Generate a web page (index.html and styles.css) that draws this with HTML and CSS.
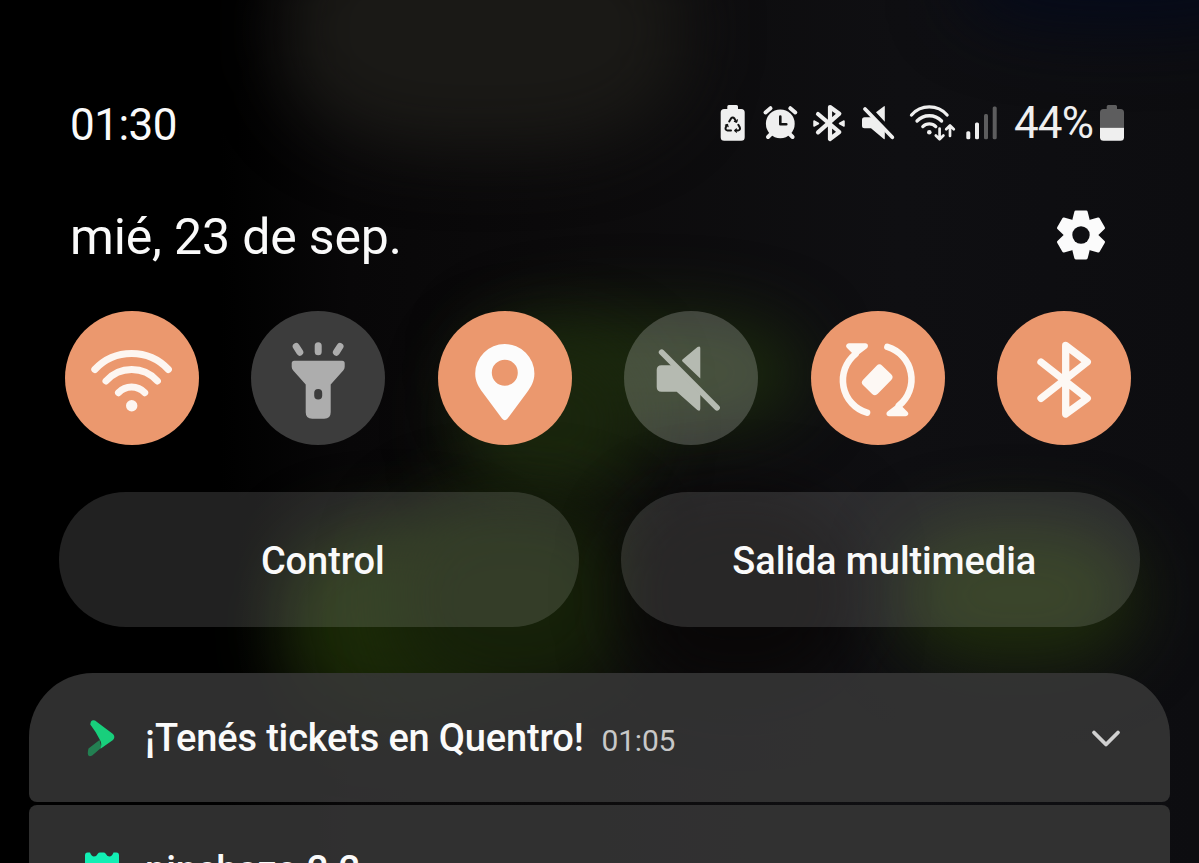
FILE: index.html
```html
<!DOCTYPE html>
<html lang="es">
<head>
  <meta charset="UTF-8">
  <title>Panel de notificaciones</title>
  <meta name="viewport" content="width=device-width, initial-scale=1.0">
  <link rel="stylesheet" href="styles.css">
</head>
<body>

  <!-- Fondo desenfocado -->
  <div class="fondo">
    <div class="mancha cafe"></div>
    <div class="mancha azul"></div>
    <div class="mancha verde-centro"></div>
    <div class="mancha verde-medio"></div>
    <div class="mancha verde-izq"></div>
    <div class="mancha verde-abajo"></div>
    <div class="mancha verde-der"></div>
    <div class="mancha rojo"></div>
  </div>

  <main class="panel">
    <!-- Barra de estado -->
    <header class="estado">
      <span class="hora">01:30</span>
      <div class="iconos">
        <svg width="37" height="50" viewBox="16 10 37 50">
          <path fill="#efefef" d="M27.3 19v-2.5q0-1.5 1.5-1.5h7.7q1.5 0 1.5 1.5V19h3.2q3.5 0 3.5 3.5v24.7q0 3.5-3.5 3.5h-17q-3.5 0-3.5-3.5V22.5q0-3.5 3.5-3.5z"/>
          <g fill="none" stroke="#111" stroke-width="2" stroke-linecap="round" stroke-linejoin="round">
            <path d="M29.200 31.500l1.800-3q1.700-2 3.400 0l1.900 3.200"/>
            <path d="M38.300 34.800l1.300 2.200q1.400 3-1.700 3.600h-2.600"/>
            <path d="M31 40.600h-3.400q-3-.6-1.700-3.600l1.300-2.200"/>
            <path d="M37.400 29.800l-.8 2.200-2.200-.6M25.400 35.200l2-.5.700 2M36.400 39l-1.500 1.600 1.500 1.600" stroke-width="1.200"/>
          </g>
        </svg>
        <svg width="53" height="50" viewBox="53 10 53 50">
          <path d="M65.500 22.500l5-4.300M95.300 22.500l-5-4.300M68 47l4-4M92.600 47l-4-4" fill="none" stroke="#efefef" stroke-width="4" stroke-linecap="round"/>
          <circle cx="80.300" cy="33.800" r="14.400" fill="#efefef"/>
          <path d="M80.300 26.500v7.800h6" fill="none" stroke="#111" stroke-width="2.600" stroke-linecap="round" stroke-linejoin="round"/>
        </svg>
        <svg width="47" height="50" viewBox="106 10 47 50">
          <path d="M118 24l21.300 18-9.300 7V17l9.300 6.700-21.300 18.600" fill="none" stroke="#efefef" stroke-width="4.200" stroke-linecap="round" stroke-linejoin="round"/>
          <path d="M114 31v5l4.500-2.500zM144 31v5l-4.500-2.500z" fill="#efefef" stroke="#efefef" stroke-width="1.500" stroke-linejoin="round"/>
        </svg>
        <svg width="49" height="50" viewBox="153 10 49 50">
          <path d="M176 22.200l8-6q.8-.4.800.6v15zM164.500 27.300h7l13.300 13.300v8q0 1-1 .4L171 38.300h-6.500q-2.500 0-2.500-2.500v-6q0-2.500 2.500-2.500z" fill="#efefef"/>
          <path d="M165 19l27.300 28.300" stroke="#efefef" stroke-width="3.800" stroke-linecap="round"/>
        </svg>
        <svg width="57" height="50" viewBox="202 10 57 50">
          <g fill="none" stroke="#efefef" stroke-width="3.300" stroke-linecap="round" stroke-linejoin="round">
            <path d="M211.500 25a23.700 23.700 0 0 1 35.600 0M217 31a17 17 0 0 1 24.600 0M222.800 36.600a9 9 0 0 1 13 0"/>
            <path stroke-width="2.700" d="M239.600 38.500v10.700M235.800 45.500l3.800 3.800 3.800-3.800M250 46v-10.500M246.200 39.200l3.800-3.800 3.800 3.800"/>
          </g>
          <circle cx="229.300" cy="42.300" r="2.300" fill="#efefef"/>
        </svg>
        <svg width="45" height="50" viewBox="259 10 45 50">
          <g fill="#efefef">
            <rect x="266.300" y="41.300" width="4" height="8" rx="1.500"/>
            <rect x="275" y="32.600" width="4" height="16.700" rx="1.500"/>
          </g>
          <g fill="#5d5d5e">
            <rect x="284" y="24" width="4" height="25.300" rx="1.500"/>
            <rect x="292.700" y="16.500" width="4" height="32.800" rx="1.500"/>
          </g>
        </svg>
        <span class="porcentaje">44%</span>
        <svg width="32" height="50" viewBox="396 10 32 50">
          <path fill="#5d5d5e" d="M406.700 19v-2.500q0-1.500 1.500-1.500h7.300q1.500 0 1.500 1.500V19h3.500q3.500 0 3.500 3.500v15.200h-24V22.500q0-3.500 3.500-3.500z"/>
          <path fill="#efefef" d="M400 37.700h24v9.500q0 3.500-3.500 3.500h-17q-3.500 0-3.500-3.500z"/>
        </svg>
      </div>
    </header>

    <div class="fecha">
      <h1>mié, 23 de sep.</h1>
      <svg class="ajustes" viewBox="-27 -27 54 54">
        <g fill="#fbfbfb" stroke="#fbfbfb" stroke-width="3" stroke-linejoin="round">
          <circle r="15.500"/>
          <path id="diente" d="M-5.200-23H5.200L7.200-15V15L5.200 23H-5.200L-7.200 15V-15z"/>
          <use href="#diente" transform="rotate(60)"/>
          <use href="#diente" transform="rotate(-60)"/>
        </g>
        <circle r="8.700" fill="#0f0f12"/>
      </svg>
    </div>

    <!-- Ajustes rápidos -->
    <section class="rapidos">
      <div class="boton activo">
        <svg viewBox="0 0 134 134">
          <g fill="none" stroke="#fdf6f1" stroke-width="7" stroke-linecap="round">
            <path d="M29.800 58.500a50.400 50.400 0 0 1 73.600 0M41 70a34.500 34.500 0 0 1 51.400 0M53.500 81.700a18 18 0 0 1 26.200 0"/>
          </g>
          <circle cx="66.700" cy="94.800" r="5.700" fill="#fdf6f1"/>
        </svg>
      </div>
      <div class="boton">
        <svg viewBox="0 0 134 134">
          <path d="M45.200 35.500l3.600 5.700M67.200 34.800v6M89 35.500l-3.600 5.700" stroke="#adadad" stroke-width="7" stroke-linecap="round"/>
          <path d="M43.200 49.700h48q2.500 0 2.500 2.500v3.500q0 2-1.500 3.800L79.700 73.500v27.700q0 6.500-6.500 6.500h-12q-6.500 0-6.500-6.500V73.500L42.200 59.500q-1.500-1.800-1.500-3.800v-3.500q0-2.500 2.500-2.500z" fill="#adadad"/>
          <rect x="63.200" y="78" width="8" height="10.500" rx="4" fill="#3c3c3c"/>
        </svg>
      </div>
      <div class="boton activo">
        <svg viewBox="0 0 134 134">
          <path fill="#fcfcfc" fill-rule="evenodd" d="M66.800 33a29.600 29.600 0 0 1 29.600 29.600c0 8-3.500 13.500-7.500 19L69.600 107.500q-2.800 3.500-5.600 0L44.700 81.600c-4-5.500-7.500-11-7.500-19A29.600 29.600 0 0 1 66.800 33zm0 15.700a13 13 0 1 0 0 26 13 13 0 0 0 0-26z"/>
        </svg>
      </div>
      <div class="boton silencio">
        <svg viewBox="0 0 134 134">
          <path d="M58.500 48.500L73.500 36q2.800-1.500 2.800 1v30.500L58.500 50.500q-1-1 0-2zM37.500 54.300H48.500L76.300 83v14.500q0 3.500-3 1.500L52.700 80.800H37.500q-4.800 0-4.800-4.800V59q0-4.700 4.800-4.700z" fill="#b5bab1"/>
          <path d="M37.700 41.300l55.300 55.400" stroke="#b5bab1" stroke-width="5.800" stroke-linecap="round"/>
        </svg>
      </div>
      <div class="boton activo">
        <svg viewBox="0 0 134 134">
          <g id="giro" stroke="#fdf8f4" stroke-linecap="round" stroke-linejoin="round">
            <path d="M44.500 43a33.800 33.800 0 0 0 11.500 58.700" fill="none" stroke-width="6.600"/>
            <path d="M38 35h16.200L45 42z" fill="#fdf8f4" stroke-width="5.500"/>
          </g>
          <use href="#giro" transform="rotate(180 66.200 68.800)"/>
          <rect x="52.500" y="58.600" width="27.400" height="20.400" rx="4" transform="rotate(-46 66.200 68.800)" fill="#fdf8f4"/>
        </svg>
      </div>
      <div class="boton activo">
        <svg viewBox="0 0 134 134">
          <path d="M44 51l46.300 36.300L68.700 103V34.500L90.300 51 44 87.300" fill="none" stroke="#fdf8f4" stroke-width="7.300" stroke-linecap="round" stroke-linejoin="round"/>
        </svg>
      </div>
    </section>

    <div class="accesos">
      <button>Control</button>
      <button>Salida multimedia</button>
    </div>

    <!-- Notificaciones -->
    <section class="notificaciones">
      <article class="tarjeta primera">
        <svg class="logo" width="34" height="42" viewBox="66 56 34 42">
          <path d="M69.500 87.500l11-8.500 2 7.500-9.300 8q-4.200 2-4.400-1.800 0-3 .7-5.200z" fill="#238052"/>
          <path d="M71.300 63.500q.4-5.500 4.700-3.900L94 73q2.700 3 0 6L81.500 87.800q1.800-5-.5-8.800-3.500-7.500-9.700-15.500z" fill="#18cf7c"/>
        </svg>
        <h2>¡Tenés tickets en Quentro!</h2>
        <time>01:05</time>
        <svg class="flecha" width="34" height="24" viewBox="0 0 34 24">
          <path d="M5 6.500l12 12 12-12" fill="none" stroke="#d0d0d0" stroke-width="3.800" stroke-linecap="round" stroke-linejoin="round"/>
        </svg>
      </article>
      <article class="tarjeta segunda">
        <svg class="logo" width="34" height="42" viewBox="0 0 34 42">
          <path d="M0 3.500Q0 .5 2.500 .5H5Q6.500 4.500 9 4.500T13 1.500Q13.500 .5 15 .5H18.500Q20 .5 20.500 1.500Q22 4.500 24.500 4.500T28.500 .5H31.500Q34 .5 34 3.500V42H0z" fill="#12efb4"/>
        </svg>
        <h2>pinchazo 2.2</h2>
      </article>
    </section>
  </main>

</body>
</html>
```

FILE: styles.css
```css
* {
  margin: 0;
  padding: 0;
  box-sizing: border-box;
}

body {
  width: 100%;
  height: 100vh;
  overflow: hidden;
  background: #000;
  color: #fafafa;
  font-family: Roboto, sans-serif;
}

svg {
  display: block;
  flex: none;
}

/* FONDO */
.fondo {
  position: absolute;
  inset: 0;
  overflow: hidden;
  background: linear-gradient(90deg, #000 220px, #080708 350px, #0c0b0c 600px, #0f0f12 900px, #0d0d10);
}

.mancha {
  position: absolute;
  border-radius: 40%;
  filter: blur(34px);
}

.cafe {
  left: 285px;
  top: -90px;
  width: 400px;
  height: 240px;
  background: #1a1916;
}

.azul {
  left: 960px;
  top: -70px;
  width: 320px;
  height: 100px;
  background: #050a1a;
}

.verde-centro {
  left: 480px;
  top: 315px;
  width: 320px;
  height: 115px;
  background: #1b290e;
}

.verde-medio {
  left: 460px;
  top: 340px;
  width: 180px;
  height: 160px;
  background: #1a260d;
}

.verde-izq {
  left: 285px;
  top: 530px;
  width: 220px;
  height: 190px;
  background: #1b2a07;
}

.verde-abajo {
  left: 390px;
  top: 500px;
  width: 240px;
  height: 200px;
  background: #162109;
}

.verde-der {
  left: 900px;
  top: 525px;
  width: 235px;
  height: 140px;
  background: #1e2b0c;
}

.rojo {
  left: 630px;
  top: 500px;
  width: 220px;
  height: 190px;
  background: #090707;
}

/* PANEL */
.panel {
  position: relative;
  height: 100vh;
  overflow: hidden;
  padding-top: 100px;
}

.estado {
  display: flex;
  justify-content: space-between;
  align-items: center;
  height: 50px;
  padding: 0 71px 0 70px;
}

.hora {
  font-size: 44px;
  letter-spacing: -0.5px;
}

.iconos {
  display: flex;
  align-items: center;
}

.porcentaje {
  width: 92px;
  padding: 0 0 5px 10px;
  font-size: 44px;
  line-height: 46px;
  letter-spacing: -0.9px;
  color: #efefef;
  white-space: nowrap;
}

.fecha {
  display: flex;
  justify-content: space-between;
  align-items: center;
  height: 60px;
  margin-top: 55px;
  padding: 0 91px 0 70px;
}

.fecha h1 {
  padding-top: 3px;
  font-size: 50px;
  font-weight: 400;
  letter-spacing: -0.15px;
}

.ajustes {
  width: 54px;
  height: 54px;
}

/* AJUSTES RÁPIDOS */
.rapidos {
  display: flex;
  justify-content: space-between;
  margin-top: 46px;
  padding: 0 68px 0 64.5px;
}

.boton {
  width: 134px;
  height: 134px;
  border-radius: 50%;
  background: #3c3c3c;
}

.boton.activo {
  background: #eb986e;
}

.boton.silencio {
  background: rgba(255, 255, 255, 0.2);
}

.accesos {
  display: flex;
  gap: 42px;
  margin-top: 47px;
  padding: 0 59px;
}

.accesos button {
  flex: 1;
  height: 135px;
  padding: 2px 0 0 8px;
  border: none;
  border-radius: 67px;
  background: rgba(255, 255, 255, 0.13);
  color: #fafafa;
  font-family: inherit;
  font-size: 38px;
  font-weight: 500;
  letter-spacing: -0.1px;
}

/* NOTIFICACIONES */
.notificaciones {
  display: flex;
  flex-direction: column;
  gap: 3px;
  margin-top: 46px;
  padding: 0 29px;
}

.tarjeta {
  display: flex;
  align-items: center;
  height: 129px;
  padding: 0 47px 0 56px;
  border-radius: 8px;
  background: rgba(56, 56, 56, 0.84);
}

.primera {
  border-radius: 64px 64px 8px 8px;
}

.tarjeta h2 {
  margin-left: 26px;
  font-size: 38px;
  font-weight: 500;
  letter-spacing: -0.17px;
}

.tarjeta time {
  margin: 6px 0 0 18px;
  font-size: 30px;
  letter-spacing: -0.2px;
  color: #c8c8c8;
}

.flecha {
  margin-left: auto;
}

.segunda {
  align-items: flex-start;
  padding-top: 47px;
}

.segunda h2 {
  line-height: 36px;
}
```
